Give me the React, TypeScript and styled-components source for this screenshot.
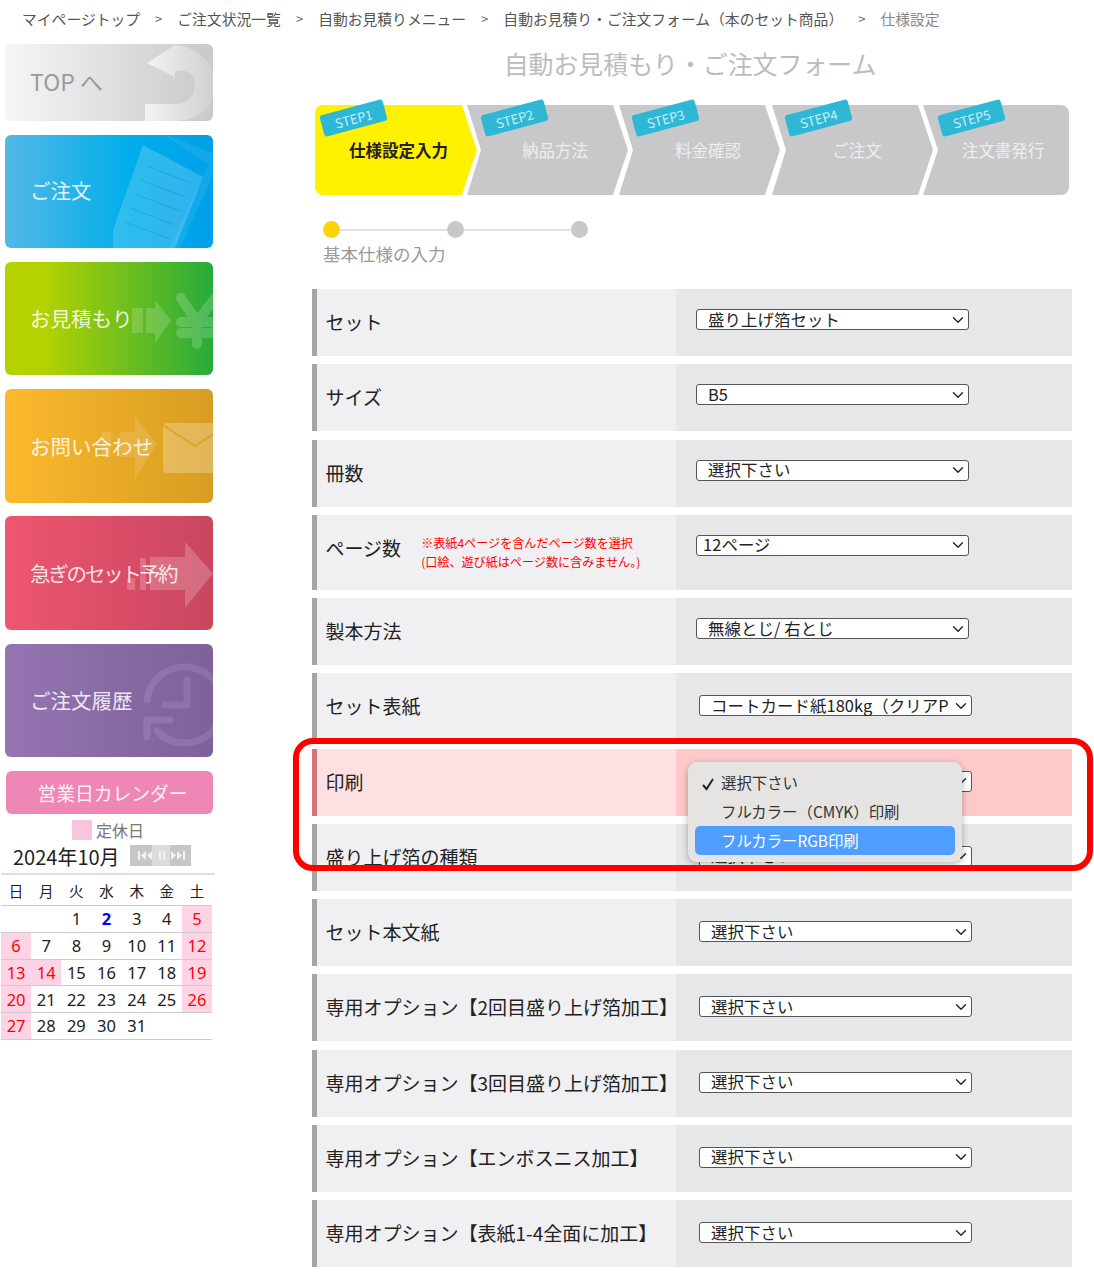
import React from "react";
import styled, { createGlobalStyle } from "styled-components";
import { ChevronDown } from "lucide-react";

const FONT = `"Noto Sans CJK JP", "Noto Sans", sans-serif`;

const Global = createGlobalStyle`
  html, body { margin: 0; padding: 0; background: #fff; }
  body { font-family: ${FONT}; color: #222; }
`;

const Page = styled.div`
  position: relative;
  width: 1094px;
  height: 1284px;
  overflow: hidden;
`;
const Crumbs = styled.nav`
  display: flex;
  align-items: center;
  gap: 12px;
  height: 36px;
  padding-left: 22px;
  margin-bottom: 8px;
  font-size: 14.8px;
  color: #555;
  white-space: nowrap;
`;
const Crumb = styled.span<{ $last?: boolean }>`
  color: ${(p) => (p.$last ? "#888" : "#555")};
`;
const Sep = styled.span`
  margin: 0 3px;
  color: #666;
  font-size: 13px;
`;
const Columns = styled.div`
  display: flex;
  align-items: flex-start;
`;
const Side = styled.aside`
  width: 214px;
  margin-left: 1px;
  display: flex;
  flex-direction: column;
`;
const Tile = styled.a<{ $h: number; $bg: string; $mb: number; $dark?: boolean; $up?: number }>`
  position: relative;
  display: flex;
  align-items: center;
  width: 208px;
  height: ${(p) => p.$h}px;
  margin: 0 0 ${(p) => p.$mb}px 4px;
  padding: 0 0 ${(p) => p.$up ?? 0}px 25px;
  box-sizing: border-box;
  border-radius: 6px;
  overflow: hidden;
  background: ${(p) => p.$bg};
  color: ${(p) => (p.$dark ? "#9a9a9a" : "rgba(255,255,255,.86)")};
  font-size: ${(p) => (p.$dark ? 23 : 20.5)}px;
  white-space: nowrap;
`;
const TileArt = styled.svg`
  position: absolute;
  left: 0;
  top: 0;
  width: 208px;
  height: 100%;
`;
const TileText = styled.span<{ $tight?: boolean }>`
  position: relative;
  letter-spacing: ${(p) => (p.$tight ? "-2.2px" : "0")};
`;
const CalButton = styled.div`
  display: flex;
  align-items: center;
  justify-content: center;
  width: 207px;
  height: 43px;
  margin-left: 5px;
  padding-left: 6px;
  box-sizing: border-box;
  border-radius: 6px;
  background: #ee87b6;
  color: rgba(255, 255, 255, 0.9);
  font-size: 18.8px;
`;
const Legend = styled.div`
  display: flex;
  align-items: center;
  justify-content: center;
  gap: 4px;
  height: 20px;
  margin: 6px 0 0 0;
  font-size: 16px;
  line-height: 18px;
  color: #777;
`;
const Swatch = styled.i`
  width: 20px;
  height: 20px;
  background: #f9c5de;
`;
const MonthBar = styled.div`
  display: flex;
  align-items: center;
  height: 33px;
  padding-left: 12px;
  gap: 10px;
  font-size: 20px;
  color: #222;
  border-bottom: 2px solid #ddd;
`;
const MonthCtl = styled.svg`
  width: 61px;
  height: 21px;
  margin-top: -2px;
`;
const CalTable = styled.table`
  width: 211px;
  border-collapse: collapse;
  table-layout: fixed;
`;
const Th = styled.th`
  height: 30px;
  padding: 0;
  font-size: 14.5px;
  font-weight: 400;
  color: #222;
  border-bottom: 1px solid #ccc;
`;
const Td = styled.td<{ $off?: boolean; $today?: boolean }>`
  height: 25.75px;
  padding: 0;
  text-align: center;
  font-family: "Noto Sans", sans-serif;
  font-size: 16.5px;
  line-height: 25px;
  border-bottom: 1px solid #ccc;
  background: ${(p) => (p.$off ? "#ffd3e6" : "transparent")};
  color: ${(p) => (p.$off ? "#f00" : p.$today ? "#00f" : "#222")};
  font-weight: ${(p) => (p.$today ? 700 : 400)};
`;
const Main = styled.main`
  width: 760px;
  margin-left: 97px;
`;
const Title = styled.h1`
  margin: 0;
  height: 40px;
  padding-right: 4px;
  box-sizing: border-box;
  line-height: 38px;
  text-align: center;
  font-size: 24.9px;
  font-weight: 400;
  color: #bcbcbc;
`;
const Steps = styled.ol`
  display: flex;
  margin: 21px 0 0 3px;
  padding: 0;
  list-style: none;
`;
const Step = styled.li<{ $w: number; $mr: number }>`
  position: relative;
  width: ${(p) => p.$w}px;
  height: 90px;
  margin-right: ${(p) => p.$mr}px;
`;
const StepShape = styled.div<{ $clip: string; $on?: boolean; $pad: number; $r: string }>`
  display: flex;
  align-items: center;
  justify-content: center;
  box-sizing: border-box;
  height: 100%;
  padding-left: ${(p) => p.$pad}px;
  clip-path: ${(p) => p.$clip};
  border-radius: ${(p) => p.$r};
  background: ${(p) => (p.$on ? "#fff100" : "#c8c8ca")};
  color: ${(p) => (p.$on ? "#222" : "#eee")};
  font-size: 16.5px;
  font-weight: ${(p) => (p.$on ? 700 : 400)};
`;
const Badge = styled.span<{ $left: number }>`
  position: absolute;
  left: ${(p) => p.$left}px;
  top: 2px;
  width: 65px;
  height: 22px;
  display: flex;
  align-items: center;
  justify-content: center;
  border-radius: 3px;
  transform: rotate(-15deg);
  background: #2fb8d6;
  color: #c9eef6;
  font-size: 13px;
`;
const Progress = styled.div`
  display: flex;
  align-items: center;
  margin: 26px 0 0 11px;
  width: 265px;
`;
const Dot = styled.i<{ $on?: boolean }>`
  flex: none;
  width: 17px;
  height: 17px;
  border-radius: 50%;
  background: ${(p) => (p.$on ? "#ffd400" : "#c8c8ca")};
`;
const Line = styled.i`
  flex: 1;
  height: 2px;
  background: #e2e2e2;
`;
const ProgressLabel = styled.div`
  margin: 4px 0 0 11px;
  height: 25px;
  line-height: 23px;
  font-size: 17.5px;
  color: #999;
`;
const Rows = styled.div`
  display: flex;
  flex-direction: column;
  gap: 8.27px;
  margin-top: 22px;
`;
const Row = styled.div<{ $h?: number; $hot?: boolean }>`
  display: flex;
  height: ${(p) => p.$h ?? 67}px;
  background: ${(p) => (p.$hot ? "#fee0e2" : "#f0f0f2")};
  border-left: 5px solid ${(p) => (p.$hot ? "#d27579" : "#a5a5a5")};
`;
const Label = styled.div<{ $lift?: boolean }>`
  display: flex;
  align-items: center;
  width: 359px;
  box-sizing: border-box;
  padding: 0 0 ${(p) => (p.$lift ? 10 : 2)}px 8.5px;
  font-size: 19px;
  color: #222;
  white-space: nowrap;
`;
const Note = styled.p`
  margin: 9px 0 0 20px;
  font-size: 12.1px;
  line-height: 19px;
  color: #f00;
`;
const Value = styled.div<{ $alt?: boolean; $hot?: boolean }>`
  flex: 1;
  box-sizing: border-box;
  padding: ${(p) => (p.$alt ? "22px 0 0 23px" : "20px 0 0 20px")};
  background: ${(p) => (p.$hot ? "#fec9c9" : "#e6e7e9")};
`;
const Select = styled.div<{ $pad: number }>`
  display: flex;
  align-items: center;
  box-sizing: border-box;
  width: 273px;
  height: 21px;
  padding: 0 1px 0 ${(p) => p.$pad}px;
  background: #fff;
  border: 1px solid #555;
  border-radius: 3px;
  font-size: 16.4px;
  color: #222;
  white-space: nowrap;
`;
const SelectText = styled.span<{ $long?: boolean }>`
  flex: 1;
  min-width: 0;
  margin: -2px 3px 0 0;
  line-height: 24px;
  overflow-x: ${(p) => (p.$long ? "clip" : "visible")};
  letter-spacing: 0.1px;
`;
const Popup = styled.div`
  position: absolute;
  left: 688px;
  top: 762px;
  width: 274px;
  height: 100px;
  box-sizing: border-box;
  padding: 6px 7px;
  border-radius: 9px;
  background: #e6e4e2;
  box-shadow: 0 2px 7px rgba(0, 0, 0, 0.3);
  z-index: 2;
`;
const Option = styled.div<{ $on?: boolean }>`
  position: relative;
  display: flex;
  align-items: center;
  height: 29px;
  padding: 0 0 1px 26px;
  box-sizing: border-box;
  border-radius: 5px;
  background: ${(p) => (p.$on ? "#4f9dff" : "transparent")};
  color: ${(p) => (p.$on ? "#fff" : "#333")};
  font-size: 15.4px;
`;
const Tick = styled.svg`
  position: absolute;
  left: 6px;
  top: 9px;
  width: 14px;
  height: 14px;
`;
const Frame = styled.div`
  position: absolute;
  left: 293px;
  top: 738px;
  width: 800px;
  height: 133px;
  box-sizing: border-box;
  border: 6px solid #f00;
  border-radius: 20px;
  z-index: 3;
`;

const arrow = (x: number, y0: number, y1: number, tip: number, h0: number, h1: number, barsEnd: number) =>
  `M${barsEnd} ${y0}H${x}V${h0}L${tip} ${(y0 + y1) / 2}L${x} ${h1}V${y1}H${barsEnd}Z`;

const ArtTop = () => (
  <TileArt viewBox="0 0 208 77" preserveAspectRatio="none">
    <defs>
      <linearGradient id="topg" x1="0" x2="1" y1="0" y2="0">
        <stop offset="0" stopColor="#f4f4f4" />
        <stop offset="1" stopColor="#cfcfcf" />
      </linearGradient>
    </defs>
    <path
      d="M142 19L170 1C196 4 212 22 210 44C208 66 190 77 170 77H140V60H170C183 60 190 52 190 40C190 30 183 25 170 27V33Z"
      fill="url(#topg)"
    />
  </TileArt>
);
const ArtDoc = () => (
  <TileArt viewBox="0 0 208 113" preserveAspectRatio="none">
    <path d="M160 0L208 18V40L175 113H165L203 30Z" fill="#fff" opacity=".07" />
    <path d="M138 10L198 42L170 113H108V95Z" fill="#fff" opacity=".18" />
    <g stroke="#0f86b8" strokeOpacity=".35" strokeWidth="1">
      <path d="M142 31L185 48M135 45L180 62M130 59L175 76M125 73L170 90M120 87L165 104" />
    </g>
  </TileArt>
);
const ArtYen = () => (
  <TileArt viewBox="0 0 208 113" preserveAspectRatio="none">
    <g fill="#fff" opacity=".17">
      <path d="M127 46h11v25h-11z" />
      <path d={arrow(150, 46, 71, 166, 38, 81, 141)} />
    </g>
    <g stroke="#fff" strokeOpacity=".18" strokeWidth="10" fill="none" strokeLinecap="round">
      <path d="M176 36L192 60L210 36M192 60V82M176 60H212M176 71H212" />
    </g>
  </TileArt>
);
const ArtMail = () => (
  <TileArt viewBox="0 0 208 114" preserveAspectRatio="none">
    <g fill="#fff" opacity=".12">
      <path d="M97 43h9v25h-9zM115 43h14v25h-14z" />
      <path d={arrow(130, 43, 68, 152, 28, 89, 128)} />
    </g>
    <path d="M162 34H208V84H162Q158 84 158 80V38Q158 34 162 34Z" fill="#fff" opacity=".25" />
    <path d="M158 36L190 57L210 44" fill="none" stroke="#dca42a" strokeWidth="2" />
  </TileArt>
);
const ArtRush = () => (
  <TileArt viewBox="0 0 208 114" preserveAspectRatio="none">
    <g fill="#fff" opacity=".2">
      <path d="M122 62h8v12h-8zM135 42h6v32h-6z" />
      <path d={arrow(180, 41, 74, 208, 26, 92, 145)} />
    </g>
  </TileArt>
);
const ArtClock = () => (
  <TileArt viewBox="0 0 208 113" preserveAspectRatio="none">
    <g fill="none" stroke="#fff" strokeOpacity=".1" strokeWidth="7" strokeLinecap="round" strokeLinejoin="round">
      <path d="M142 56A38 38 0 1 1 152 87" />
      <path d="M182 36V61H160" />
      <path d="M165 76H142V93" />
    </g>
  </TileArt>
);

const W = ["日", "月", "火", "水", "木", "金", "土"];
type Cell = { d?: number; off?: boolean; today?: boolean };
const n = (d: number): Cell => ({ d });
const o = (d: number): Cell => ({ d, off: true });
const CAL: Cell[][] = [
  [{}, {}, n(1), { d: 2, today: true }, n(3), n(4), o(5)],
  [o(6), n(7), n(8), n(9), n(10), n(11), o(12)],
  [o(13), o(14), n(15), n(16), n(17), n(18), o(19)],
  [o(20), n(21), n(22), n(23), n(24), n(25), o(26)],
  [o(27), n(28), n(29), n(30), n(31), {}, {}],
];

const MID = "polygon(0 0, 146px 0, 161px 45px, 146px 90px, 0 90px, 14px 45px)";
const STEPS = [
  { l: "STEP1", t: "仕様設定入力", w: 162, mr: -10, left: 6, pad: 5, on: true, r: "8px 0 0 8px",
    clip: "polygon(0 0, 147px 0, 162px 45px, 147px 90px, 0 90px)" },
  { l: "STEP2", t: "納品方法", w: 161, mr: -9, left: 15, pad: 15, r: "0", clip: MID },
  { l: "STEP3", t: "料金確認", w: 161, mr: -8, left: 14, pad: 17, r: "0", clip: MID },
  { l: "STEP4", t: "ご注文", w: 161, mr: -10, left: 14, pad: 9, r: "0", clip: MID },
  { l: "STEP5", t: "注文書発行", w: 146, mr: 0, left: 16, pad: 14, r: "0 8px 8px 0",
    clip: "polygon(0 0, 146px 0, 146px 90px, 0 90px, 15px 45px)" },
];

type R = { label: string; val: string; pad?: number; alt?: boolean; hot?: boolean; h?: number; note?: boolean; long?: boolean };
const ROWS: R[] = [
  { label: "セット", val: "盛り上げ箔セット" },
  { label: "サイズ", val: "B5" },
  { label: "冊数", val: "選択下さい" },
  { label: "ページ数", val: "12ページ", pad: 6, h: 75, note: true },
  { label: "製本方法", val: "無線とじ/ 右とじ" },
  { label: "セット表紙", val: "コートカード紙180kg（クリアPP", alt: true, long: true },
  { label: "印刷", val: "選択下さい", alt: true, hot: true },
  { label: "盛り上げ箔の種類", val: "選択下さい", alt: true },
  { label: "セット本文紙", val: "選択下さい", alt: true },
  { label: "専用オプション【2回目盛り上げ箔加工】", val: "選択下さい", alt: true },
  { label: "専用オプション【3回目盛り上げ箔加工】", val: "選択下さい", alt: true },
  { label: "専用オプション【エンボスニス加工】", val: "選択下さい", alt: true },
  { label: "専用オプション【表紙1-4全面に加工】", val: "選択下さい", alt: true },
];

export default function App() {
  return (
    <Page>
      <Global />
      <Crumbs>
        <Crumb>マイページトップ</Crumb>
        <Sep>&gt;</Sep>
        <Crumb>ご注文状況一覧</Crumb>
        <Sep>&gt;</Sep>
        <Crumb>自動お見積りメニュー</Crumb>
        <Sep>&gt;</Sep>
        <Crumb>自動お見積り・ご注文フォーム（本のセット商品）</Crumb>
        <Sep>&gt;</Sep>
        <Crumb $last>仕様設定</Crumb>
      </Crumbs>
      <Columns>
        <Side>
          <Tile $h={77} $mb={14} $dark $up={3} $bg="linear-gradient(90deg,#f6f6f6,#c9c9c9)">
            <ArtTop />
            <TileText>TOP へ</TileText>
          </Tile>
          <Tile $h={113} $mb={14} $up={3} $bg="linear-gradient(90deg,#53b8e6,#00aeeb 60%,#00a0e9)">
            <ArtDoc />
            <TileText>ご注文</TileText>
          </Tile>
          <Tile $h={113} $mb={14} $up={1} $bg="linear-gradient(90deg,#b5d200 18%,#26ab3b)">
            <ArtYen />
            <TileText>お見積もり</TileText>
          </Tile>
          <Tile $h={114} $mb={13} $bg="linear-gradient(90deg,#fbb92d,#d79d22)">
            <ArtMail />
            <TileText>お問い合わせ</TileText>
          </Tile>
          <Tile $h={114} $mb={14} $bg="linear-gradient(90deg,#ee5670,#c9465f)">
            <ArtRush />
            <TileText $tight>急ぎのセット予約</TileText>
          </Tile>
          <Tile $h={113} $mb={14} $up={2} $bg="linear-gradient(90deg,#9475b1,#7d619a)">
            <ArtClock />
            <TileText>ご注文履歴</TileText>
          </Tile>
          <CalButton>営業日カレンダー</CalButton>
          <Legend>
            <Swatch />
            定休日
          </Legend>
          <MonthBar>
            2024年10月
            <MonthCtl viewBox="0 0 61 21">
              <rect width="61" height="21" fill="#c6c6c6" />
              <rect x="22" width="18" height="21" fill="#dcdcdc" />
              <path
                d="M8 6h2v9H8zM16 6v9l-5-4.500zM22 6v9l-5-4.500zM29 6h2v9h-2zM33 6h2v9h-2zM41 6v9l5-4.500zM47 6v9l5-4.500zM53 6h2v9h-2z"
                fill="#f2f2f2"
              />
            </MonthCtl>
          </MonthBar>
          <CalTable>
            <thead>
              <tr>
                {W.map((w) => (
                  <Th key={w}>{w}</Th>
                ))}
              </tr>
            </thead>
            <tbody>
              {CAL.map((week, i) => (
                <tr key={i}>
                  {week.map((c, j) => (
                    <Td key={j} $off={c.off} $today={c.today}>
                      {c.d}
                    </Td>
                  ))}
                </tr>
              ))}
            </tbody>
          </CalTable>
        </Side>
        <Main>
          <Title>自動お見積もり・ご注文フォーム</Title>
          <Steps>
            {STEPS.map((s) => (
              <Step key={s.l} $w={s.w} $mr={s.mr}>
                <StepShape $clip={s.clip} $on={s.on} $pad={s.pad} $r={s.r}>
                  {s.t}
                </StepShape>
                <Badge $left={s.left}>{s.l}</Badge>
              </Step>
            ))}
          </Steps>
          <Progress>
            <Dot $on />
            <Line />
            <Dot />
            <Line />
            <Dot />
          </Progress>
          <ProgressLabel>基本仕様の入力</ProgressLabel>
          <Rows>
            {ROWS.map((r) => (
              <Row key={r.label} $h={r.h} $hot={r.hot}>
                <Label $lift={r.note}>
                  {r.label}
                  {r.note && (
                    <Note>
                      ※表紙4ページを含んだページ数を選択
                      <br />
                      (口絵、遊び紙はページ数に含みません。)
                    </Note>
                  )}
                </Label>
                <Value $alt={r.alt} $hot={r.hot}>
                  <Select $pad={r.pad ?? 11}>
                    <SelectText $long={r.long}>{r.val}</SelectText>
                    <ChevronDown size={18} color="#222" strokeWidth={1.8} />
                  </Select>
                </Value>
              </Row>
            ))}
          </Rows>
        </Main>
      </Columns>
      <Popup>
        <Option>
          <Tick viewBox="0 0 14 14">
            <path d="M2 8l3.500 4L12 2" fill="none" stroke="#222" strokeWidth="2" />
          </Tick>
          選択下さい
        </Option>
        <Option>フルカラー（CMYK）印刷</Option>
        <Option $on>フルカラーRGB印刷</Option>
      </Popup>
      <Frame />
    </Page>
  );
}
